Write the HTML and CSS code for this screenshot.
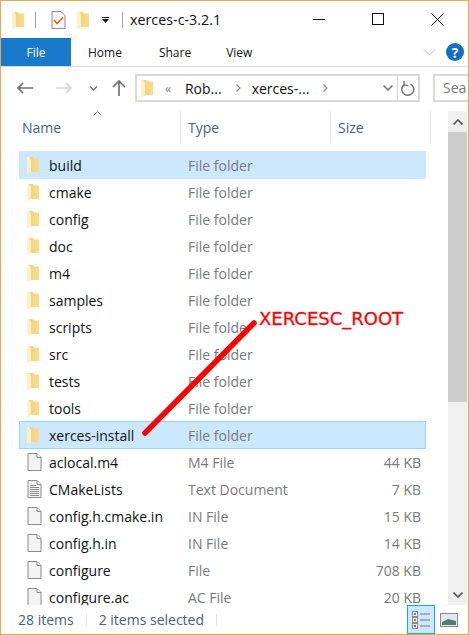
FILE: index.html
```html
<!DOCTYPE html>
<html>
   <head>
      <meta charset="utf-8">
      <title>xerces-c-3.2.1</title>
      <link rel="stylesheet" href="styles.css">
   </head>
   <body>
      <svg width="0" height="0" class="defs">
         <defs>
            <linearGradient id="folderFill" x1="0" y1="0" x2="1" y2="0">
               <stop offset="0" stop-color="#f3cf73"/>
               <stop offset="1" stop-color="#f8dc8e"/>
            </linearGradient>
            <symbol id="folder" viewBox="0 0 12 18" preserveAspectRatio="xMinYMid meet">
               <path d="M0 1 H6 L7 2.5 H12 V16 H4 L0 18 Z" fill="url(#folderFill)"/>
               <path d="M0 1 H2 L4 4 V16 L0 18 Z" fill="#fdf1c8"/>
            </symbol>
            <symbol id="doc" viewBox="0 0 15 18">
               <path d="M1 .5 H10 L14 4.5 V17.5 H1 Z" fill="#f4f4f4" stroke="#8c8c8c"/>
               <path d="M10 .5 V4.5 H14" fill="#fff" stroke="#8c8c8c"/>
            </symbol>
            <symbol id="textdoc" viewBox="0 0 15 18">
               <path d="M1 .5 H10 L14 4.5 V17.5 H1 Z" fill="#f4f4f4" stroke="#8c8c8c"/>
               <path d="M10 .5 V4.5 H14" fill="#fff" stroke="#8c8c8c"/>
               <path d="M3 5.5 H9 M3 7.5 H12 M3 9.5 H12 M3 11.5 H12 M3 13.5 H12 M3 15.5 H12" stroke="#8c8c8c"/>
            </symbol>
         </defs>
      </svg>

      <div class="window">

         <!-- title bar -->
         <div class="titlebar">
            <svg class="qa-folder"><use href="#folder"/></svg>
            <span class="qa-sep"></span>
            <svg class="qa-check" viewBox="0 0 15 18">
               <path d="M1 .5 H10 L14 4.5 V17.5 H1 Z" fill="#f7f7f7" stroke="#8c8c8c"/>
               <path d="M3 9 L6 12.5 L12 6.5" fill="none" stroke="#e8591c" stroke-width="1.5"/>
            </svg>
            <svg class="qa-folder2"><use href="#folder"/></svg>
            <svg class="qa-drop" viewBox="0 0 7 6">
               <path d="M0 0 H7 V1 H0 Z M0 2 H7 L3.5 6 Z" fill="#111"/>
            </svg>
            <span class="qa-sep2"></span>
            <span class="title">xerces-c-3.2.1</span>
            <div class="winbtns">
               <svg viewBox="0 0 13 13"><path d="M0 6.5 H12" stroke="#111"/></svg>
               <svg viewBox="0 0 13 13"><rect x=".5" y=".5" width="11" height="11" fill="none" stroke="#111"/></svg>
               <svg viewBox="0 0 13 13"><path d="M.5 .5 L12.5 12.5 M12.5 .5 L.5 12.5" stroke="#111"/></svg>
            </div>
         </div>

         <!-- ribbon tabs -->
         <div class="tabs">
            <span class="tab file">File</span>
            <span class="tab home">Home</span>
            <span class="tab share">Share</span>
            <span class="tab view">View</span>
            <svg class="collapse" viewBox="0 0 12 7"><path d="M.5 .5 L6 6 L11.5 .5" fill="none" stroke="#b5b5b5"/></svg>
            <span class="help">?</span>
         </div>

         <!-- address bar -->
         <div class="navbar">
            <svg class="nav back" viewBox="0 0 16 12"><path d="M16 6 H1 M6 1 L1 6 L6 11" fill="none" stroke="#6d6d6d" stroke-width="1.6"/></svg>
            <svg class="nav forward" viewBox="0 0 16 12"><path d="M0 6 H15 M10 1 L15 6 L10 11" fill="none" stroke="#d4d4d4" stroke-width="1.6"/></svg>
            <svg class="nav recent" viewBox="0 0 8 5"><path d="M.5 .5 L4 4 L7.5 .5" fill="none" stroke="#6d6d6d" stroke-width="1.3"/></svg>
            <svg class="nav up" viewBox="0 0 14 16"><path d="M7 16 V1 M1 7 L7 1 L13 7" fill="none" stroke="#6d6d6d" stroke-width="1.6"/></svg>
            <div class="address">
               <svg class="addr-folder"><use href="#folder"/></svg>
               <span class="crumb-more">«</span>
               <span class="crumb c1">Rob...</span>
               <svg class="chev" viewBox="0 0 5 8"><path d="M.5 .5 L4 4 L.5 7.5" fill="none" stroke="#8a8a8a" stroke-width="1.2"/></svg>
               <span class="crumb c2">xerces-...</span>
               <svg class="chev" viewBox="0 0 5 8"><path d="M.5 .5 L4 4 L.5 7.5" fill="none" stroke="#8a8a8a" stroke-width="1.2"/></svg>
               <svg class="addr-drop" viewBox="0 0 10 6"><path d="M.5 .5 L5 5 L9.5 .5" fill="none" stroke="#6d6d6d" stroke-width="1.5"/></svg>
               <span class="refresh">
                  <svg viewBox="0 0 14 15"><path d="M9.5 3 A6 6 0 1 1 4 3" fill="none" stroke="#7d7d7d" stroke-width="1.6"/><path d="M3 0 V4.5 H7.5" fill="none" stroke="#7d7d7d" stroke-width="1.4"/></svg>
               </span>
            </div>
            <div class="search">Sea</div>
         </div>

         <div class="content">
            <div class="pane">
               <div class="columns">
                  <span class="col col-name">Name
                     <svg class="sort" viewBox="0 0 9 5"><path d="M.5 4.5 L4.5 .5 L8.5 4.5" fill="none" stroke="#8a8a8a"/></svg>
                  </span>
                  <span class="col col-type">Type</span>
                  <span class="col col-size">Size</span>
               </div>
               <div class="rows">
                  <div class="row selected"><svg class="icon"><use href="#folder"/></svg><span class="name">build</span><span class="type">File folder</span><span class="size"></span></div>
                  <div class="row"><svg class="icon"><use href="#folder"/></svg><span class="name">cmake</span><span class="type">File folder</span><span class="size"></span></div>
                  <div class="row"><svg class="icon"><use href="#folder"/></svg><span class="name">config</span><span class="type">File folder</span><span class="size"></span></div>
                  <div class="row"><svg class="icon"><use href="#folder"/></svg><span class="name">doc</span><span class="type">File folder</span><span class="size"></span></div>
                  <div class="row"><svg class="icon"><use href="#folder"/></svg><span class="name">m4</span><span class="type">File folder</span><span class="size"></span></div>
                  <div class="row"><svg class="icon"><use href="#folder"/></svg><span class="name">samples</span><span class="type">File folder</span><span class="size"></span></div>
                  <div class="row"><svg class="icon"><use href="#folder"/></svg><span class="name">scripts</span><span class="type">File folder</span><span class="size"></span></div>
                  <div class="row"><svg class="icon"><use href="#folder"/></svg><span class="name">src</span><span class="type">File folder</span><span class="size"></span></div>
                  <div class="row"><svg class="icon"><use href="#folder"/></svg><span class="name">tests</span><span class="type">File folder</span><span class="size"></span></div>
                  <div class="row"><svg class="icon"><use href="#folder"/></svg><span class="name">tools</span><span class="type">File folder</span><span class="size"></span></div>
                  <div class="row focused"><svg class="icon"><use href="#folder"/></svg><span class="name">xerces-install</span><span class="type">File folder</span><span class="size"></span></div>
                  <div class="row"><svg class="icon"><use href="#doc"/></svg><span class="name">aclocal.m4</span><span class="type">M4 File</span><span class="size">44 KB</span></div>
                  <div class="row"><svg class="icon"><use href="#textdoc"/></svg><span class="name">CMakeLists</span><span class="type">Text Document</span><span class="size">7 KB</span></div>
                  <div class="row"><svg class="icon"><use href="#doc"/></svg><span class="name">config.h.cmake.in</span><span class="type">IN File</span><span class="size">15 KB</span></div>
                  <div class="row"><svg class="icon"><use href="#doc"/></svg><span class="name">config.h.in</span><span class="type">IN File</span><span class="size">14 KB</span></div>
                  <div class="row"><svg class="icon"><use href="#doc"/></svg><span class="name">configure</span><span class="type">File</span><span class="size">708 KB</span></div>
                  <div class="row"><svg class="icon"><use href="#doc"/></svg><span class="name">configure.ac</span><span class="type">AC File</span><span class="size">20 KB</span></div>
               </div>
            </div>
            <div class="scrollbar">
               <span class="sb-btn"><svg viewBox="0 0 10 6"><path d="M.5 5.5 L5 1 L9.5 5.5" fill="none" stroke="#555" stroke-width="1.6"/></svg></span>
               <span class="sb-thumb"></span>
               <span class="sb-track"></span>
               <span class="sb-btn"><svg viewBox="0 0 10 6"><path d="M.5 .5 L5 5 L9.5 .5" fill="none" stroke="#555" stroke-width="1.6"/></svg></span>
            </div>
         </div>

         <div class="status">
            <span class="count">28 items</span>
            <span class="status-sep"></span>
            <span class="selection">2 items selected</span>
            <span class="status-sep"></span>
            <span class="view-btn active">
               <svg viewBox="0 0 18 18">
                  <rect x=".5" y=".5" width="5" height="5" fill="#fff" stroke="#8a8a8a"/>
                  <rect x=".5" y="6.5" width="5" height="5" fill="#fff" stroke="#8a8a8a"/>
                  <rect x=".5" y="12.5" width="5" height="5" fill="#fff" stroke="#8a8a8a"/>
                  <path d="M2 3 H4" stroke="#4f8a8a" stroke-width="2"/>
                  <path d="M2 9 H4" stroke="#8a8a3a" stroke-width="2"/>
                  <path d="M2 15 H4" stroke="#b0502a" stroke-width="2"/>
                  <path d="M8 3 H18 M8 9 H18 M8 15 H18" stroke="#777"/>
               </svg>
            </span>
            <span class="view-btn">
               <svg viewBox="0 0 18 14">
                  <rect x=".5" y=".5" width="17" height="13" fill="#dfe9f2" stroke="#8a8a8a"/>
                  <path d="M2 9 L8 6 L16 8 V12 H2 Z" fill="#4f7f6c"/>
               </svg>
            </span>
         </div>

         <!-- annotation drawn over the listing -->
         <svg class="pointer" viewBox="0 0 115 116">
            <path d="M3 113 L112 3" stroke="#f00" stroke-width="5.5" stroke-linecap="round"/>
         </svg>
         <span class="pointer-label">XERCESC_ROOT</span>
      </div>
   </body>
</html>
```
FILE: styles.css
```css
* {
   box-sizing : border-box;
}

html, body {
   margin : 0px;
   padding : 0px;
   background-color : #fff;
}

body {
   font-family : "Open Sans", "Noto Sans", sans-serif;
   font-size : 14px;
   color : #111;
}

.defs {
   position : absolute;
}

.window {
   position : relative;
   display : flex;
   flex-direction : column;
   width : 469px;
   height : 635px;
   border : 1px solid #e8a858;
   overflow : hidden;
}

/* title bar */
.titlebar {
   display : flex;
   align-items : center;
   height : 37px;
   flex : none;
}

.qa-folder {
   width : 12px;
   height : 18px;
   margin-left : 11px;
}

.qa-sep {
   width : 1px;
   height : 16px;
   background-color : #a0a0a0;
   margin-left : 11px;
}

.qa-check {
   width : 15px;
   height : 18px;
   margin-left : 15px;
}

.qa-folder2 {
   width : 12px;
   height : 18px;
   margin-left : 11px;
}

.qa-drop {
   width : 7px;
   height : 6px;
   margin-left : 13px;
}

.qa-sep2 {
   width : 1px;
   height : 16px;
   background-color : #a0a0a0;
   margin-left : 13px;
}

.title {
   margin-left : 7px;
   font-size : 14.3px;
}

.winbtns {
   display : flex;
   align-items : center;
   gap : 46px;
   margin-left : auto;
   margin-right : 24px;
}

.winbtns svg {
   width : 13px;
   height : 13px;
}

/* ribbon tabs */
.tabs {
   display : flex;
   align-items : center;
   height : 29px;
   flex : none;
   border-bottom : 1px solid #dadbdc;
   font-size : 12px;
}

.tab.file {
   display : flex;
   align-items : center;
   justify-content : center;
   width : 70px;
   height : 28px;
   background-color : #1979ca;
   color : #fff;
}

.tab.home {
   margin-left : 17px;
}

.tab.share {
   margin-left : 37px;
}

.tab.view {
   margin-left : 35px;
}

.collapse {
   width : 13px;
   height : 7px;
   margin-left : auto;
}

.help {
   display : flex;
   align-items : center;
   justify-content : center;
   width : 18px;
   height : 18px;
   margin-left : 10px;
   margin-right : 4px;
   border-radius : 50%;
   background-color : #0e70c8;
   color : #fff;
   font-size : 14px;
   font-weight : bold;
}

/* address bar */
.navbar {
   display : flex;
   align-items : center;
   height : 44px;
   flex : none;
   padding-bottom : 2px;
   overflow : hidden;
}

.nav {
   flex : none;
}

.nav.back {
   width : 16px;
   height : 12px;
   margin-left : 16px;
}

.nav.forward {
   width : 16px;
   height : 12px;
   margin-left : 23px;
}

.nav.recent {
   width : 9px;
   height : 5px;
   margin-left : 17px;
}

.nav.up {
   width : 14px;
   height : 16px;
   margin-left : 14px;
}

.address {
   display : flex;
   align-items : center;
   width : 285px;
   height : 28px;
   margin-left : 9px;
   border : 2px solid #d9d9d9;
   flex : none;
}

.addr-folder {
   width : 12px;
   height : 18px;
   margin-left : 4px;
   flex : none;
}

.crumb-more {
   margin-left : 12px;
   color : #808080;
   font-size : 12px;
}

.crumb {
   font-size : 14px;
}

.crumb.c1 {
   margin-left : 14px;
}

.crumb.c2 {
   margin-left : 11px;
}

.chev {
   width : 5px;
   height : 8px;
   margin-left : 14px;
   flex : none;
}

.addr-drop {
   width : 10px;
   height : 6px;
   margin-left : auto;
   margin-right : 4px;
}

.refresh {
   display : flex;
   align-items : center;
   justify-content : center;
   width : 21px;
   height : 100%;
   flex : none;
   border-left : 1px solid #d9d9d9;
}

.refresh svg {
   width : 14px;
   height : 15px;
}

.search {
   width : 40px;
   height : 28px;
   margin-left : 13px;
   padding-left : 8px;
   border : 2px solid #d9d9d9;
   border-right : none;
   color : #777;
   line-height : 24px;
   font-size : 14px;
   flex : none;
}

/* listing */
.content {
   display : flex;
   flex : 1;
   min-height : 0;
}

.pane {
   flex : 1;
   min-width : 0;
   padding-left : 18px;
   overflow : hidden;
}

.columns {
   display : flex;
   align-items : center;
   height : 32px;
   color : #4c607a;
}

.col {
   position : relative;
   display : flex;
   align-items : center;
   height : 32px;
   padding-left : 3px;
   border-right : 1px solid #e5e5e5;
}

.col-name {
   width : 162px;
}

.col-type {
   width : 150px;
   padding-left : 7px;
}

.col-size {
   width : 100px;
   padding-left : 7px;
}

.sort {
   position : absolute;
   left : 74px;
   top : 0px;
   width : 9px;
   height : 5px;
}

.rows {
   margin-top : 8px;
}

.row {
   display : flex;
   align-items : center;
   height : 28px;
   width : 407px;
   margin-bottom : -1px;
   border : 1px solid transparent;
}

.row.selected {
   background-color : #cce8ff;
}

.row.focused {
   background-color : #cce8ff;
   border-color : #99d1ff;
}

.icon {
   width : 15px;
   height : 18px;
   margin-left : 7px;
   flex : none;
}

.name {
   width : 139px;
   margin-left : 7px;
   color : #111;
   white-space : nowrap;
}

.type {
   width : 120px;
   color : #7a7a7a;
   white-space : nowrap;
}

.size {
   width : 113px;
   text-align : right;
   color : #7a7a7a;
}

.scrollbar {
   display : flex;
   flex-direction : column;
   width : 19px;
   margin-right : 1px;
   flex : none;
   background-color : #f0f0f0;
}

.sb-btn {
   display : flex;
   align-items : center;
   justify-content : center;
   height : 21px;
   flex : none;
}

.sb-btn svg {
   width : 10px;
   height : 6px;
}

.sb-thumb {
   height : 270px;
   flex : none;
   background-color : #cdcdcd;
}

.sb-track {
   flex : 1;
}

/* status bar */
.status {
   display : flex;
   align-items : center;
   height : 29px;
   flex : none;
   padding-left : 17px;
   padding-right : 5px;
   color : #4c607a;
}

.status-sep {
   width : 1px;
   height : 12px;
   background-color : #e5e5e5;
   margin-left : 12px;
   margin-right : 12px;
}

.view-btn {
   display : flex;
   align-items : center;
   justify-content : center;
   width : 28px;
   height : 29px;
   border : 1px solid transparent;
}

.view-btn.active {
   margin-left : auto;
   background-color : #cce8ff;
   border-color : #1ea3e6;
}

.view-btn svg {
   width : 18px;
   height : 18px;
}

/* annotation */
.pointer {
   position : absolute;
   left : 141px;
   top : 319px;
   width : 115px;
   height : 116px;
}

.pointer-label {
   position : absolute;
   left : 258px;
   top : 306px;
   color : #f00;
   font-family : "DejaVu Sans", sans-serif;
   font-size : 18px;
   line-height : 24px;
   -webkit-text-stroke : 0.3px #f00;
}
```
